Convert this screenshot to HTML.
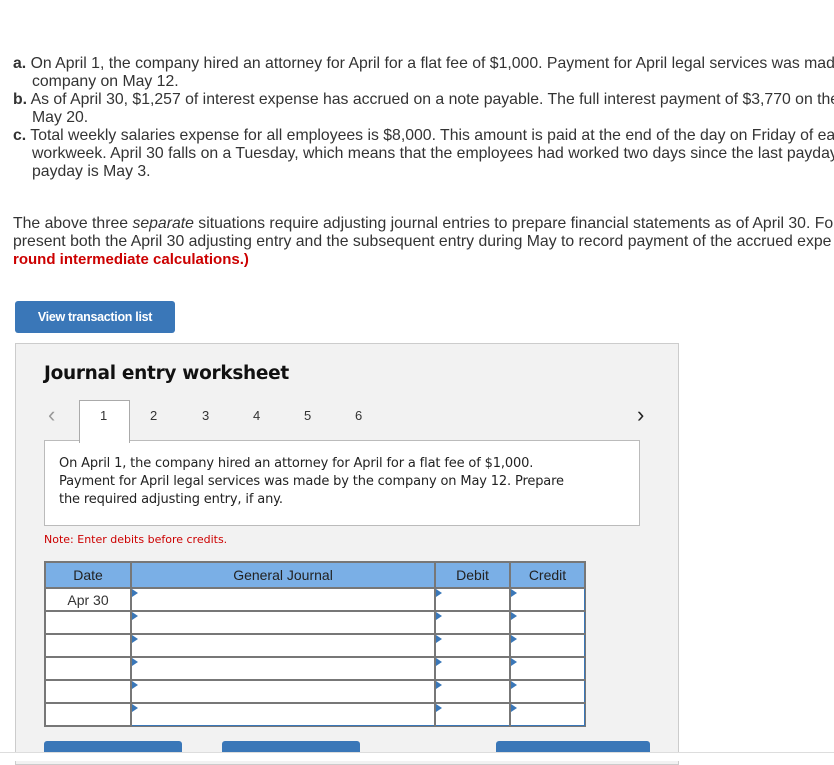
<!DOCTYPE html>
<html><head><meta charset="utf-8"><style>
body{margin:0;width:834px;height:760px;overflow:hidden;background:#fff;font-family:"Liberation Sans",sans-serif;color:#333;position:relative}
.wrap{position:absolute;left:0;top:0;width:834px;height:300px;overflow:hidden}
.t{position:absolute;white-space:nowrap;font-size:15.8px;line-height:18px;letter-spacing:0}
.btn{position:absolute;background:#3a77b8;border-radius:3px;color:#fff}
.panel{position:absolute;left:15px;top:343px;width:662px;height:420px;background:#f2f2f2;border:1px solid #ccc}
.a{position:absolute}
table{border-collapse:collapse;position:absolute;left:44px;top:561px}
td{border:2px solid #777;height:21px;padding:0;font-size:14px;text-align:center;background:#fff;position:relative}
th{background:#7aafe6;border:2px solid #777;font-weight:normal;font-size:14px;height:22px;color:#222}
td.i{border:2px solid #3a77b8;outline:1px solid #777}
td.i:before{content:"";position:absolute;left:0;top:0;border-left:6px solid #3a77b8;border-top:4px solid transparent;border-bottom:4px solid transparent}
</style></head><body>
<div class="wrap">
<div class="t" style="left:13px;top:55px"><b>a.</b> On April 1, the company hired an attorney for April for a flat fee of $1,000. Payment for April legal services was made</div>
<div class="t" style="left:32px;top:73px">company on May 12.</div>
<div class="t" style="left:13px;top:91px"><b>b.</b> As of April 30, $1,257 of interest expense has accrued on a note payable. The full interest payment of $3,770 on the</div>
<div class="t" style="left:32px;top:109px">May 20.</div>
<div class="t" style="left:13px;top:127px"><b>c.</b> Total weekly salaries expense for all employees is $8,000. This amount is paid at the end of the day on Friday of ea</div>
<div class="t" style="left:32px;top:145px">workweek. April 30 falls on a Tuesday, which means that the employees had worked two days since the last payday</div>
<div class="t" style="left:32px;top:163px">payday is May 3.</div>
<div class="t" style="left:13px;top:215px">The above three <i>separate</i> situations require adjusting journal entries to prepare financial statements as of April 30. For</div>
<div class="t" style="left:13px;top:233px">present both the April 30 adjusting entry and the subsequent entry during May to record payment of the accrued expe</div>
<div class="t" style="left:13px;top:251px;color:#c00;font-weight:bold;font-size:15px">round intermediate calculations.)</div>
</div>
<div class="btn" style="left:15px;top:301px;width:160px;height:32px;font-size:12.5px;font-weight:bold;line-height:32px;text-align:center;letter-spacing:-0.3px">View transaction list</div>
<div class="panel"></div>
<div class="a" style="left:44px;top:363px;font-size:18.5px;font-weight:bold;color:#111;font-family:'DejaVu Sans',sans-serif;letter-spacing:-0.3px">Journal entry worksheet</div>
<div class="a" style="left:48px;top:402px;font-size:22px;color:#999">‹</div>
<div class="a" style="left:79px;top:400px;width:49px;height:42px;background:#fff;border:1px solid #aaa;border-bottom:none;z-index:2"></div>
<div class="a" style="left:100px;top:408px;font-size:13px;z-index:3">1</div>
<div class="a" style="left:150px;top:408px;font-size:13px">2</div>
<div class="a" style="left:202px;top:408px;font-size:13px">3</div>
<div class="a" style="left:253px;top:408px;font-size:13px">4</div>
<div class="a" style="left:304px;top:408px;font-size:13px">5</div>
<div class="a" style="left:355px;top:408px;font-size:13px">6</div>
<div class="a" style="left:637px;top:402px;font-size:22px;color:#222">›</div>
<div class="a" style="left:44px;top:440px;width:594px;height:84px;background:#fff;border:1px solid #bbb"></div>
<div class="a" style="left:59px;top:455px;font-size:13px;line-height:18px;font-family:'DejaVu Sans',sans-serif;color:#222;white-space:nowrap;z-index:3;letter-spacing:-0.15px">On April 1, the company hired an attorney for April for a flat fee of $1,000.<br>Payment for April legal services was made by the company on May 12. Prepare<br>the required adjusting entry, if any.</div>
<div class="a" style="left:44px;top:533px;font-size:11px;color:#c00;font-family:'DejaVu Sans',sans-serif">Note: Enter debits before credits.</div>
<table>
<tr><th style="width:82px">Date</th><th style="width:300px">General Journal</th><th style="width:71px">Debit</th><th style="width:71px">Credit</th></tr>
<tr><td>Apr 30</td><td class="i"></td><td class="i"></td><td class="i"></td></tr>
<tr><td></td><td class="i"></td><td class="i"></td><td class="i"></td></tr>
<tr><td></td><td class="i"></td><td class="i"></td><td class="i"></td></tr>
<tr><td></td><td class="i"></td><td class="i"></td><td class="i"></td></tr>
<tr><td></td><td class="i"></td><td class="i"></td><td class="i"></td></tr>
<tr><td></td><td class="i"></td><td class="i"></td><td class="i"></td></tr>
</table>
<div class="btn" style="left:44px;top:741px;width:138px;height:11px;border-radius:3px 3px 0 0"></div>
<div class="btn" style="left:222px;top:741px;width:138px;height:11px;border-radius:3px 3px 0 0"></div>
<div class="btn" style="left:496px;top:741px;width:154px;height:11px;border-radius:3px 3px 0 0"></div>
<div class="a" style="left:0;top:752px;width:834px;height:8px;background:#fff;border-top:1px solid #ddd"></div>
</body></html>
